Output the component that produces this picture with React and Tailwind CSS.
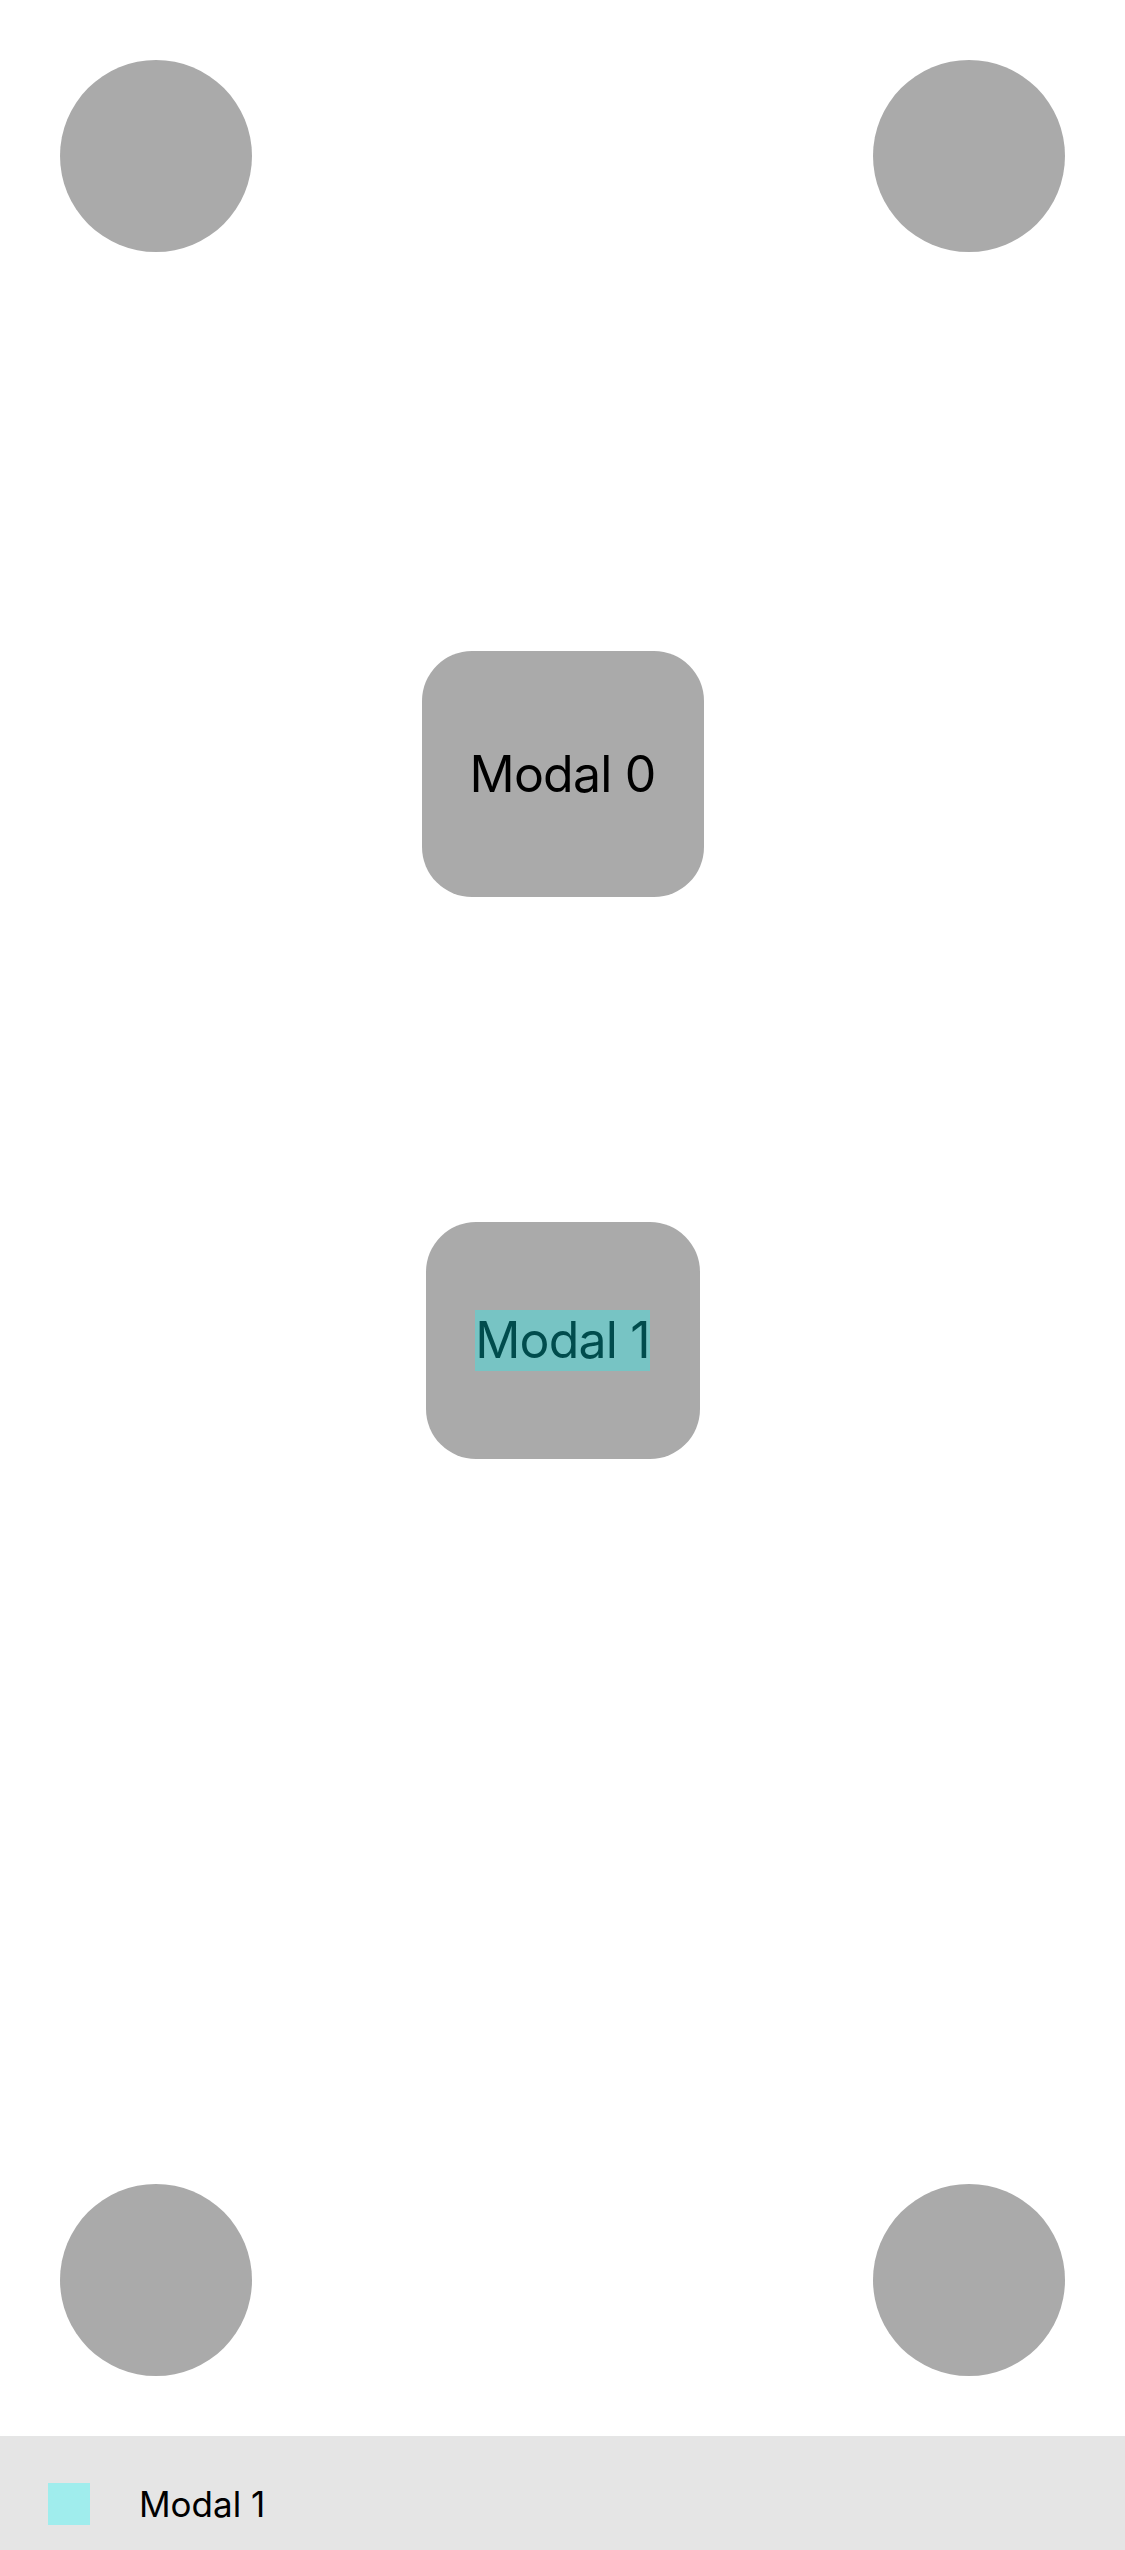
const font = { fontFamily: 'Inter, "Noto Sans", sans-serif' }

function Dot() {
  return <div className="w-[192px] h-[192px] rounded-full bg-[#aaaaaa]" />
}

function Modal({ label, highlighted, className }) {
  return (
    <div className={`flex items-center justify-center rounded-[50px] bg-[#aaaaaa] ${className}`}>
      <span className="relative text-[50px] leading-[61px] text-black tracking-[-0.8px]">
        {label}
        {highlighted && <span className="absolute inset-0 bg-[#00ffff]/30" />}
      </span>
    </div>
  )
}

export default function App() {
  return (
    <div className="flex flex-col w-[1125px] h-[2550px] bg-white overflow-hidden" style={font}>
      <div className="flex flex-col flex-1 px-[60px] pt-[60px] pb-[60px]">
        <div className="flex justify-between">
          <Dot />
          <Dot />
        </div>
        <div className="flex justify-center mt-[399px]">
          <Modal label="Modal 0" className="w-[282px] h-[246px]" />
        </div>
        <div className="flex justify-center mt-[325px]">
          <Modal label="Modal 1" highlighted className="w-[274px] h-[237px]" />
        </div>
        <div className="flex-1" />
        <div className="flex justify-between">
          <Dot />
          <Dot />
        </div>
      </div>
      <div className="h-[114px] bg-[#e5e5e5] pt-[47px] pl-[48px]">
        <div className="flex items-center gap-[49px] h-[42px]">
          <div className="w-[42px] h-[42px] bg-[#00ffff]/30" />
          <span className="text-[35px] leading-[42px] text-black">Modal 1</span>
        </div>
      </div>
    </div>
  )
}
